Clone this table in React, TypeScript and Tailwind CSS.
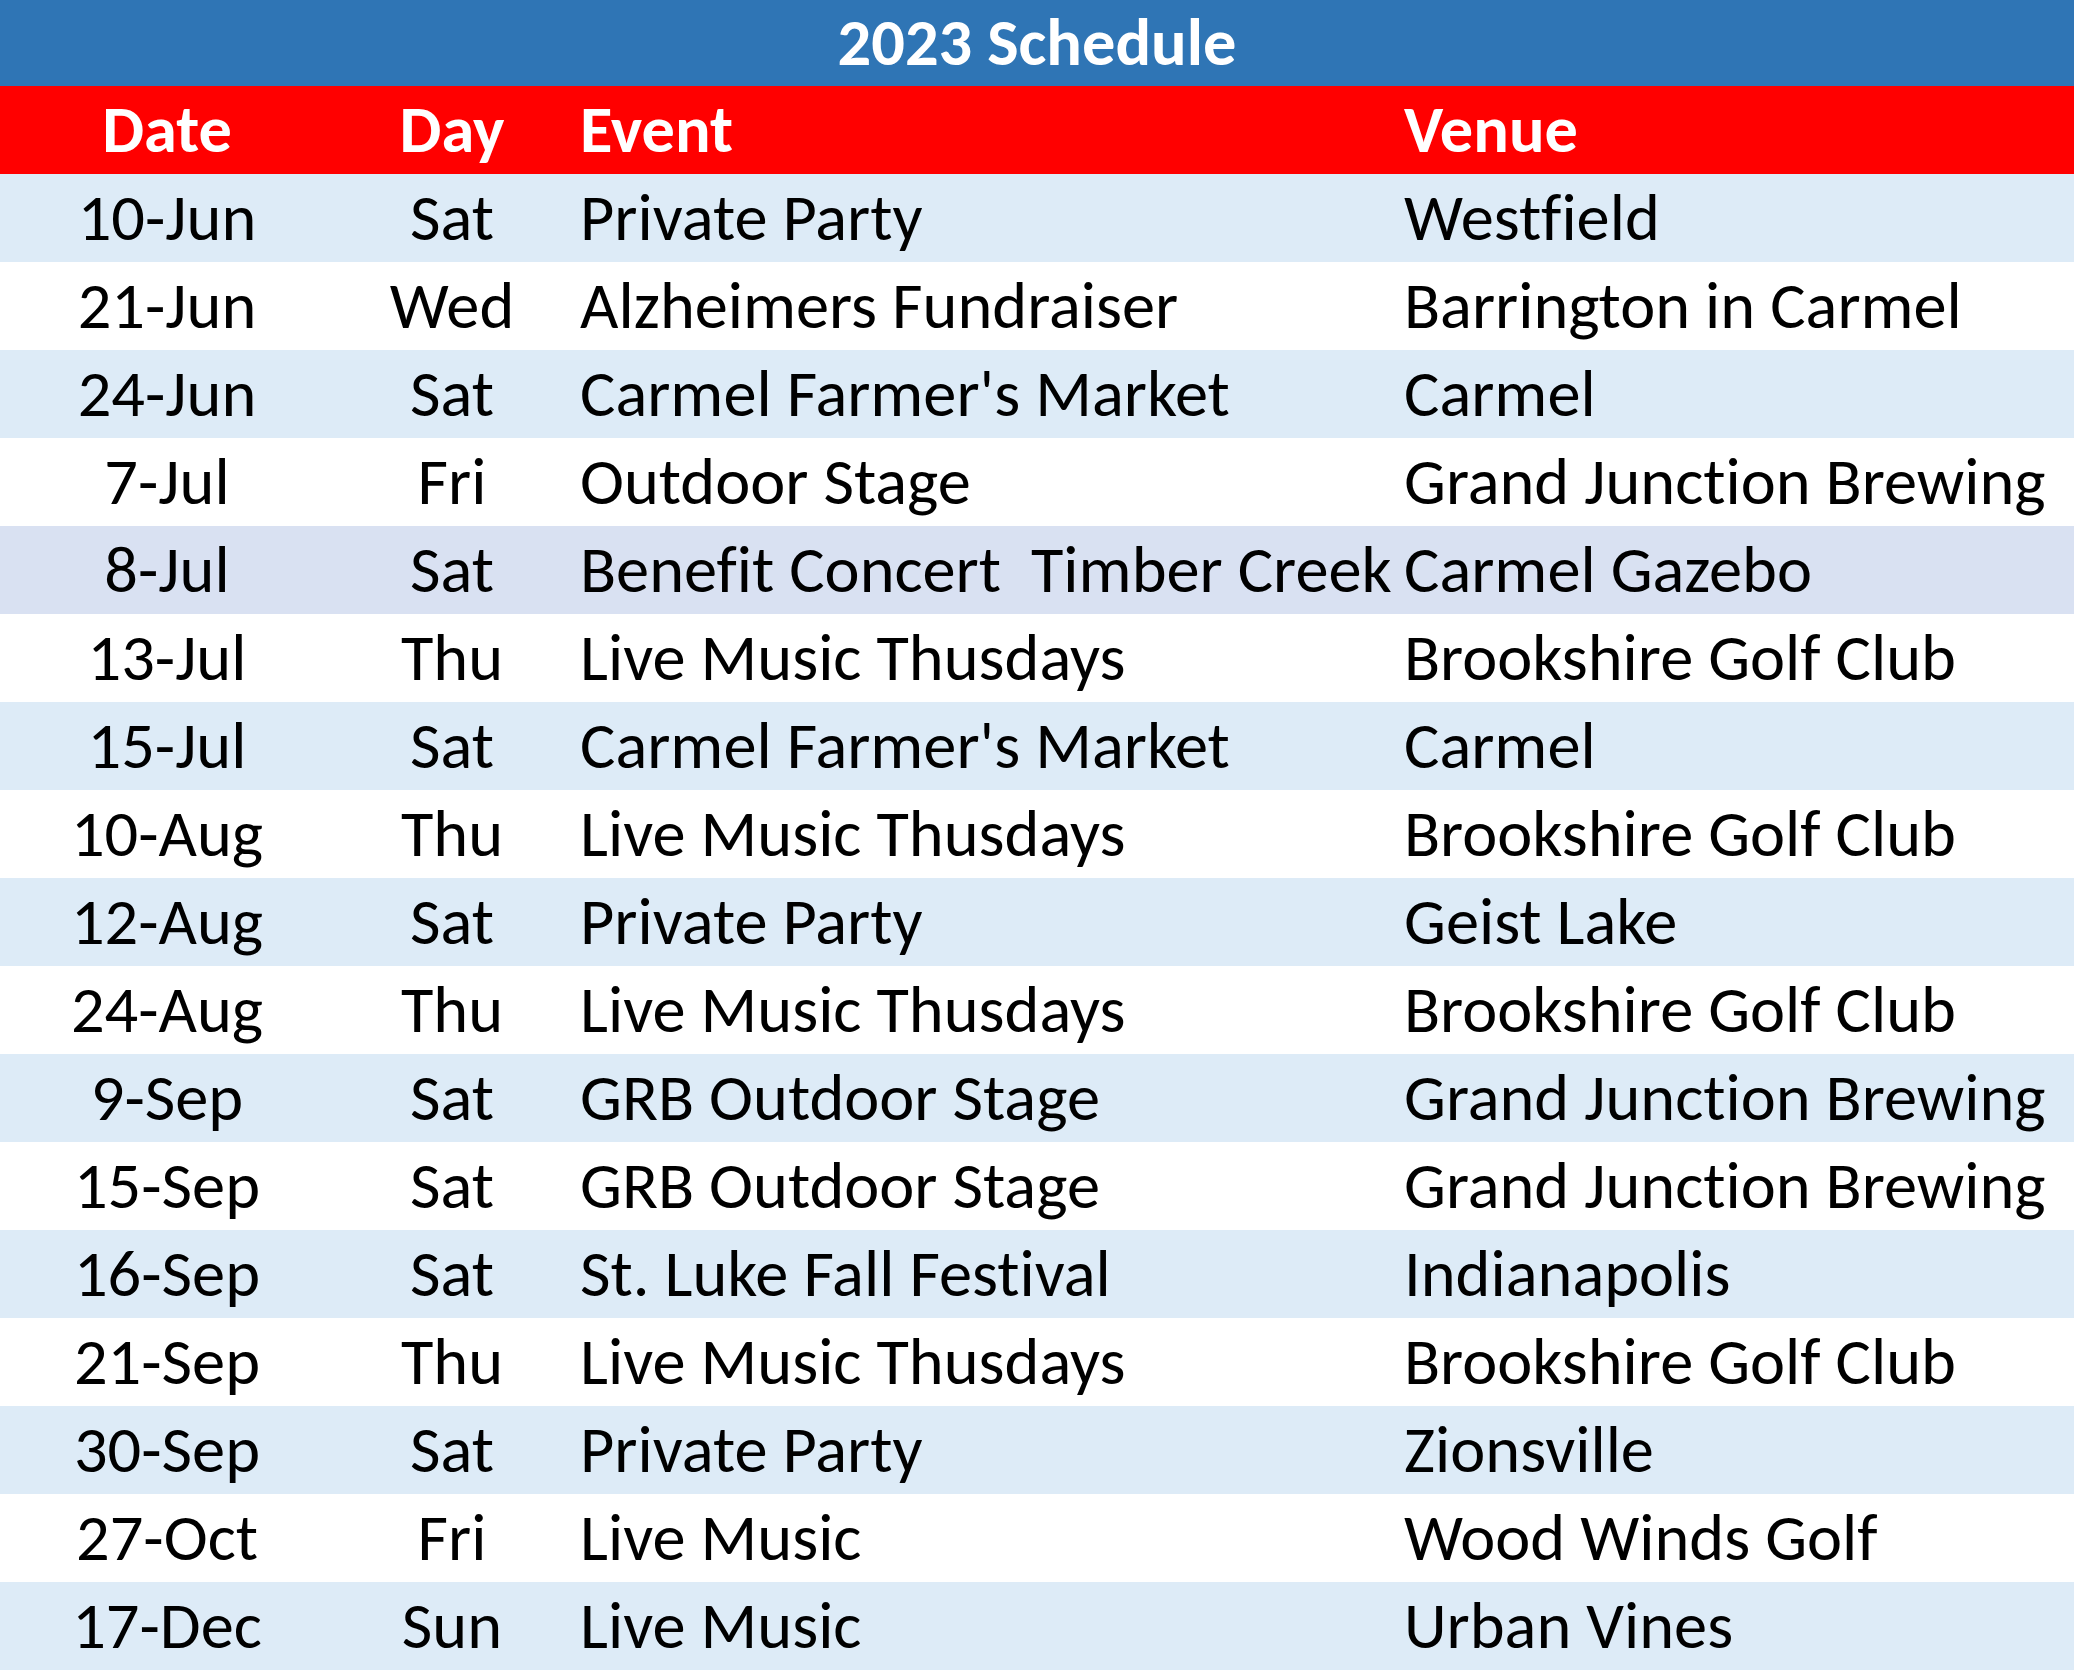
import React from "react";

type Row = { date: string; day: string; event: string; venue: string; bg: string };

const rows: Row[] = [
  { date: "10-Jun", day: "Sat", event: "Private Party", venue: "Westfield", bg: "bg-[#ddebf7]" },
  { date: "21-Jun", day: "Wed", event: "Alzheimers Fundraiser", venue: "Barrington in Carmel", bg: "bg-white" },
  { date: "24-Jun", day: "Sat", event: "Carmel Farmer's Market", venue: "Carmel", bg: "bg-[#ddebf7]" },
  { date: "7-Jul", day: "Fri", event: "Outdoor Stage", venue: "Grand Junction Brewing", bg: "bg-white" },
  { date: "8-Jul", day: "Sat", event: "Benefit Concert\u00a0 Timber Creek", venue: "Carmel Gazebo", bg: "bg-[#d9e1f2]" },
  { date: "13-Jul", day: "Thu", event: "Live Music Thusdays", venue: "Brookshire Golf Club", bg: "bg-white" },
  { date: "15-Jul", day: "Sat", event: "Carmel Farmer's Market", venue: "Carmel", bg: "bg-[#ddebf7]" },
  { date: "10-Aug", day: "Thu", event: "Live Music Thusdays", venue: "Brookshire Golf Club", bg: "bg-white" },
  { date: "12-Aug", day: "Sat", event: "Private Party", venue: "Geist Lake", bg: "bg-[#ddebf7]" },
  { date: "24-Aug", day: "Thu", event: "Live Music Thusdays", venue: "Brookshire Golf Club", bg: "bg-white" },
  { date: "9-Sep", day: "Sat", event: "GRB Outdoor Stage", venue: "Grand Junction Brewing", bg: "bg-[#ddebf7]" },
  { date: "15-Sep", day: "Sat", event: "GRB Outdoor Stage", venue: "Grand Junction Brewing", bg: "bg-white" },
  { date: "16-Sep", day: "Sat", event: "St. Luke Fall Festival", venue: "Indianapolis", bg: "bg-[#ddebf7]" },
  { date: "21-Sep", day: "Thu", event: "Live Music Thusdays", venue: "Brookshire Golf Club", bg: "bg-white" },
  { date: "30-Sep", day: "Sat", event: "Private Party", venue: "Zionsville", bg: "bg-[#ddebf7]" },
  { date: "27-Oct", day: "Fri", event: "Live Music", venue: "Wood Winds Golf", bg: "bg-white" },
  { date: "17-Dec", day: "Sun", event: "Live Music", venue: "Urban Vines", bg: "bg-[#ddebf7]" },
];

const grid = "grid grid-cols-[334px_236px_828px_1fr] h-[88px] items-center";

export default function App() {
  return (
    <div className="w-[2074px] bg-white text-black font-['Carlito','Lato',sans-serif] text-[66.4px] leading-[1.1] [font-variant-ligatures:none]">
      <div className="h-[86px] bg-[#2f75b5] flex items-center justify-center text-white font-bold">
        2023 Schedule
      </div>
      <div className={`${grid} bg-[#ff0000] text-white font-bold`}>
        <div className="text-center">Date</div>
        <div className="text-center">Day</div>
        <div className="pl-[10px]">Event</div>
        <div className="pl-[6px]">Venue</div>
      </div>
      {rows.map((r, i) => (
        <div key={i} className={`${grid} ${r.bg}`}>
          <div className="text-center whitespace-nowrap">{r.date}</div>
          <div className="text-center whitespace-nowrap">{r.day}</div>
          <div className="pl-[10px] whitespace-nowrap">{r.event}</div>
          <div className="pl-[6px] whitespace-nowrap">{r.venue}</div>
        </div>
      ))}
    </div>
  );
}
